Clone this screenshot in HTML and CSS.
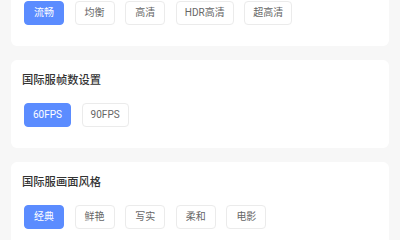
FILE: index.html
```html
<!DOCTYPE html>
<html lang="zh-CN">
<head>
<meta charset="utf-8">
<link rel="stylesheet" href="styles.css">
</head>
<body>
<div class="page">
  <section class="card card-cut">
    <div class="options">
      <span class="opt active">流畅</span>
      <span class="opt">均衡</span>
      <span class="opt">高清</span>
      <span class="opt">HDR高清</span>
      <span class="opt">超高清</span>
    </div>
  </section>
  <section class="card">
    <h3 class="title">国际服帧数设置</h3>
    <div class="options">
      <span class="opt active">60FPS</span>
      <span class="opt">90FPS</span>
    </div>
  </section>
  <section class="card">
    <h3 class="title">国际服画面风格</h3>
    <div class="options">
      <span class="opt active">经典</span>
      <span class="opt">鲜艳</span>
      <span class="opt">写实</span>
      <span class="opt">柔和</span>
      <span class="opt">电影</span>
    </div>
  </section>
</div>
</body>
</html>
```

FILE: styles.css
```css
html, body {
  margin: 0;
  padding: 0;
  background: #f7f7f7;
  font-family: Roboto, "Noto Sans CJK SC", sans-serif;
  overflow: hidden;
}
.page {
  display: flex;
  flex-direction: column;
  gap: 14px;
  padding: 0 11px;
}
.card {
  background: #ffffff;
  border-radius: 6px;
  padding: 13px 11px 21px 11px;
}
.card-cut {
  border-top-left-radius: 0;
  border-top-right-radius: 0;
  padding-top: 1px;
}
.title {
  margin: 0 0 14px 0;
  font-size: 11.3px;
  line-height: 16px;
  font-weight: 500;
  color: #333333;
}
.options {
  display: flex;
  gap: 10.6px;
  padding-left: 2px;
}
.opt {
  box-sizing: border-box;
  height: 24px;
  min-width: 40px;
  padding: 0 8px;
  border: 1px solid #ebebeb;
  border-radius: 4px;
  font-size: 10px;
  line-height: 22px;
  text-align: center;
  color: #666666;
  background: #ffffff;
  white-space: nowrap;
}
.opt.active {
  background: #5b8cff;
  border-color: #5b8cff;
  color: #ffffff;
}
```
